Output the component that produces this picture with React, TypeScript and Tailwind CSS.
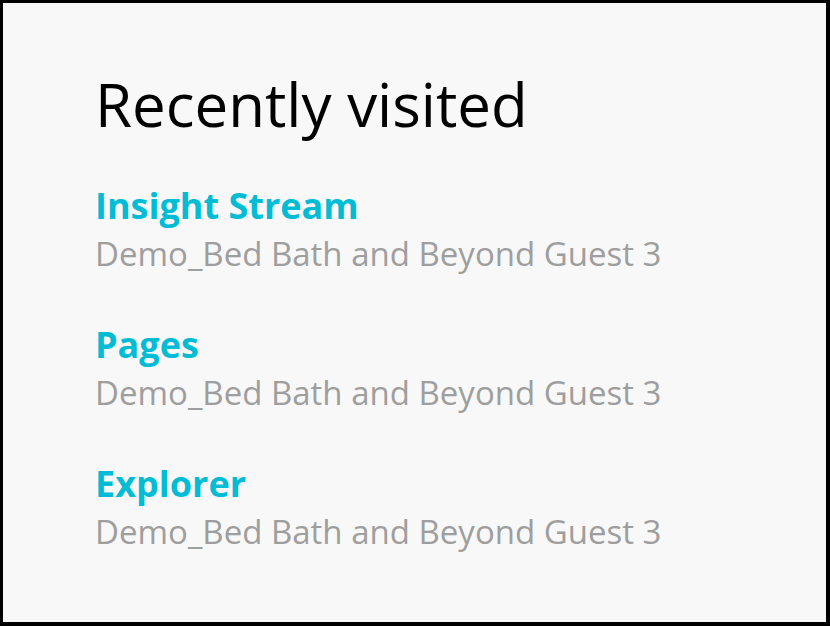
const items = [
  { title: "Insight Stream", subtitle: "Demo_Bed Bath and Beyond Guest 3" },
  { title: "Pages", subtitle: "Demo_Bed Bath and Beyond Guest 3" },
  { title: "Explorer", subtitle: "Demo_Bed Bath and Beyond Guest 3" },
];

const App = () => {
  return (
    <div className="w-[830px] h-[626px] bg-[#f8f8f8] border-l-[3px] border-t-[3px] border-r-4 border-b-4 border-black font-['Open_Sans',sans-serif]">
      <div className="pl-[92px] pt-[63px]">
        <h1 className="text-[60px] leading-[76px] text-black font-normal">Recently visited</h1>
        <div className="flex flex-col gap-[43px] mt-[40px]">
          {items.map((item) => (
            <div key={item.title} className="flex flex-col">
              <p className="text-[36px] leading-[48px] font-bold text-[#00bcd4]">{item.title}</p>
              <p className="text-[33px] leading-[48px] text-[#9e9e9e]">{item.subtitle}</p>
            </div>
          ))}
        </div>
      </div>
    </div>
  );
};

export default App;
